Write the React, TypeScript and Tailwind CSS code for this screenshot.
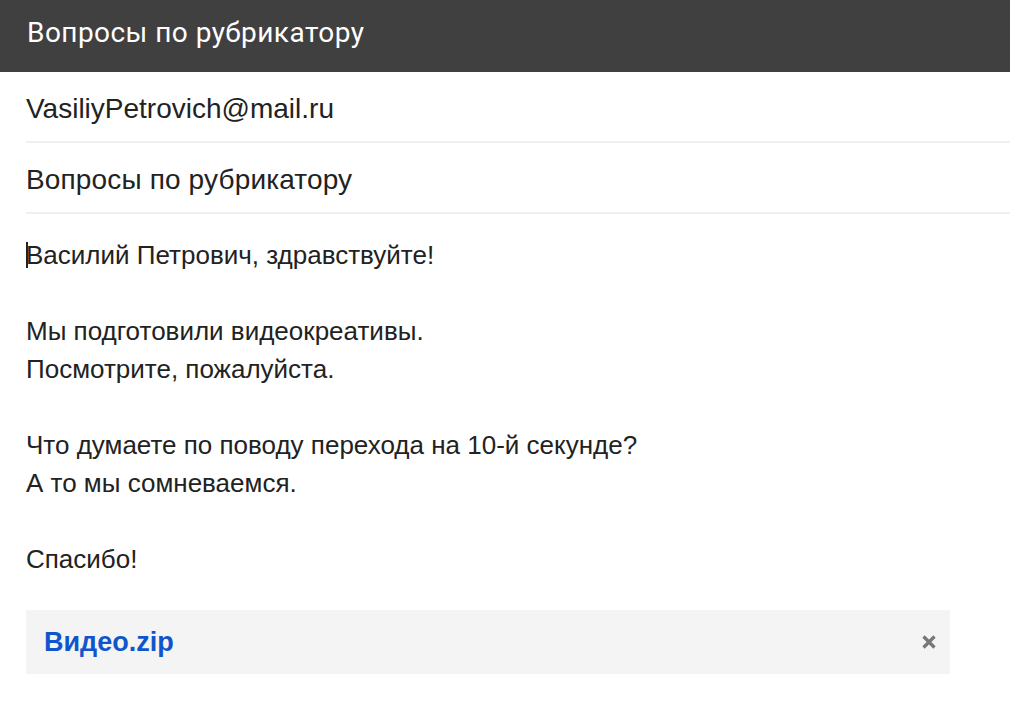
import React from "react";

export default function App() {
  const body = "font-['Liberation_Sans',Arial,sans-serif] text-[26px] leading-[38px] text-[#222]";
  const field = "font-['Liberation_Sans',Arial,sans-serif] text-[28px] text-[#222]";
  return (
    <div className="w-[1010px] h-[705px] bg-white overflow-hidden">
      <div className="h-[72px] bg-[#404040] flex items-center pl-[27px] pb-[6px]">
        <span className="font-['Roboto',sans-serif] text-[28px] text-white tracking-[0.45px]">Вопросы по рубрикатору</span>
      </div>
      <div className="ml-[26px]">
        <div className={`h-[71px] border-b-2 border-[#efefef] flex items-center pt-[4px] ${field}`}>VasiliyPetrovich@mail.ru</div>
        <div className={`h-[71px] border-b-2 border-[#efefef] flex items-center pt-[4px] ${field} tracking-[0.15px]`}>Вопросы по рубрикатору</div>
        <div className={`pt-[22px] ${body}`}>
          <div className="relative">
            <span className="absolute left-0 top-[6px] w-[2px] h-[26px] bg-[#222]" />
            Василий Петрович, здравствуйте!
          </div>
          <div>&nbsp;</div>
          <div>Мы подготовили видеокреативы.</div>
          <div>Посмотрите, пожалуйста.</div>
          <div>&nbsp;</div>
          <div>Что думаете по поводу перехода на 10-й секунде?</div>
          <div>А то мы сомневаемся.</div>
          <div>&nbsp;</div>
          <div>Спасибо!</div>
        </div>
        <div className="mt-[32px] w-[924px] h-[64px] bg-[#f4f4f4] flex items-center justify-between pl-[18px] pr-[13px]">
          <span className="font-['Liberation_Sans',Arial,sans-serif] font-bold text-[27px] text-[#1155cc]">Видео.zip</span>
          <svg width="16" height="16" viewBox="0 0 16 16">
            <path d="M2.5 2.5 L13.5 13.5 M13.5 2.5 L2.5 13.5" stroke="#777" strokeWidth="3.2" strokeLinecap="butt" />
          </svg>
        </div>
      </div>
    </div>
  );
}
